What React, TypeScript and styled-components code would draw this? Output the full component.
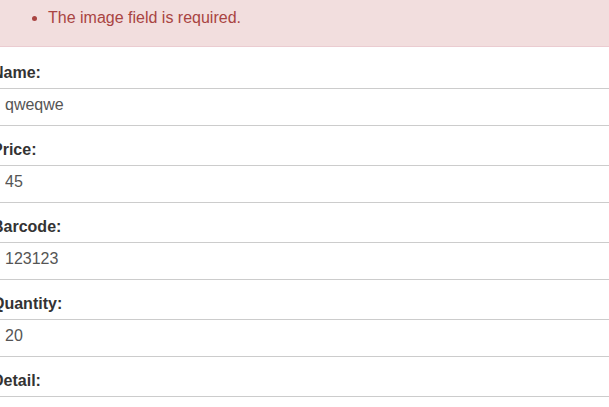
import React from "react";
import styled, { createGlobalStyle } from "styled-components";

const Global = createGlobalStyle`
  html, body { margin: 0; padding: 0; background: #fff; overflow: hidden; }
  body { font-family: "Liberation Sans", Arial, Helvetica, sans-serif; font-size: 16px; color: #333; }
`;

const Page = styled.div`
  margin: -9px -40px 0 -8px;
`;

const Alert = styled.div`
  background: #f2dede;
  border: 1px solid #ebccd1;
  color: #a94442;
  padding: 15px 15px 17px;
  margin-bottom: 16px;
`;

const ErrorList = styled.ul`
  margin: 0;
  padding-left: 40px;
  line-height: 22px;
  font-size: 16px;
`;

const Group = styled.div`
  margin-bottom: 14px;
`;

const Label = styled.label`
  display: block;
  font-weight: bold;
  font-size: 16px;
  line-height: 20px;
  margin-bottom: 5px;
  color: #333;
`;

const Input = styled.input`
  display: block;
  box-sizing: border-box;
  width: 100%;
  height: 38px;
  padding: 4px 12px 8px;
  border: 1px solid #ccc;
  border-radius: 0;
  font-family: inherit;
  font-size: 16px;
  color: #555;
  background: #fff;
  outline: none;
`;

const fields = [
  { label: "Name:", value: "qweqwe" },
  { label: "Price:", value: "45" },
  { label: "Barcode:", value: "123123" },
  { label: "Quantity:", value: "20" },
  { label: "Detail:", value: "" },
];

export default function App() {
  return (
    <Page>
      <Global />
      <Alert>
        <ErrorList>
          <li>The image field is required.</li>
        </ErrorList>
      </Alert>
      {fields.map((f) => (
        <Group key={f.label}>
          <Label>{f.label}</Label>
          <Input defaultValue={f.value} readOnly />
        </Group>
      ))}
    </Page>
  );
}
